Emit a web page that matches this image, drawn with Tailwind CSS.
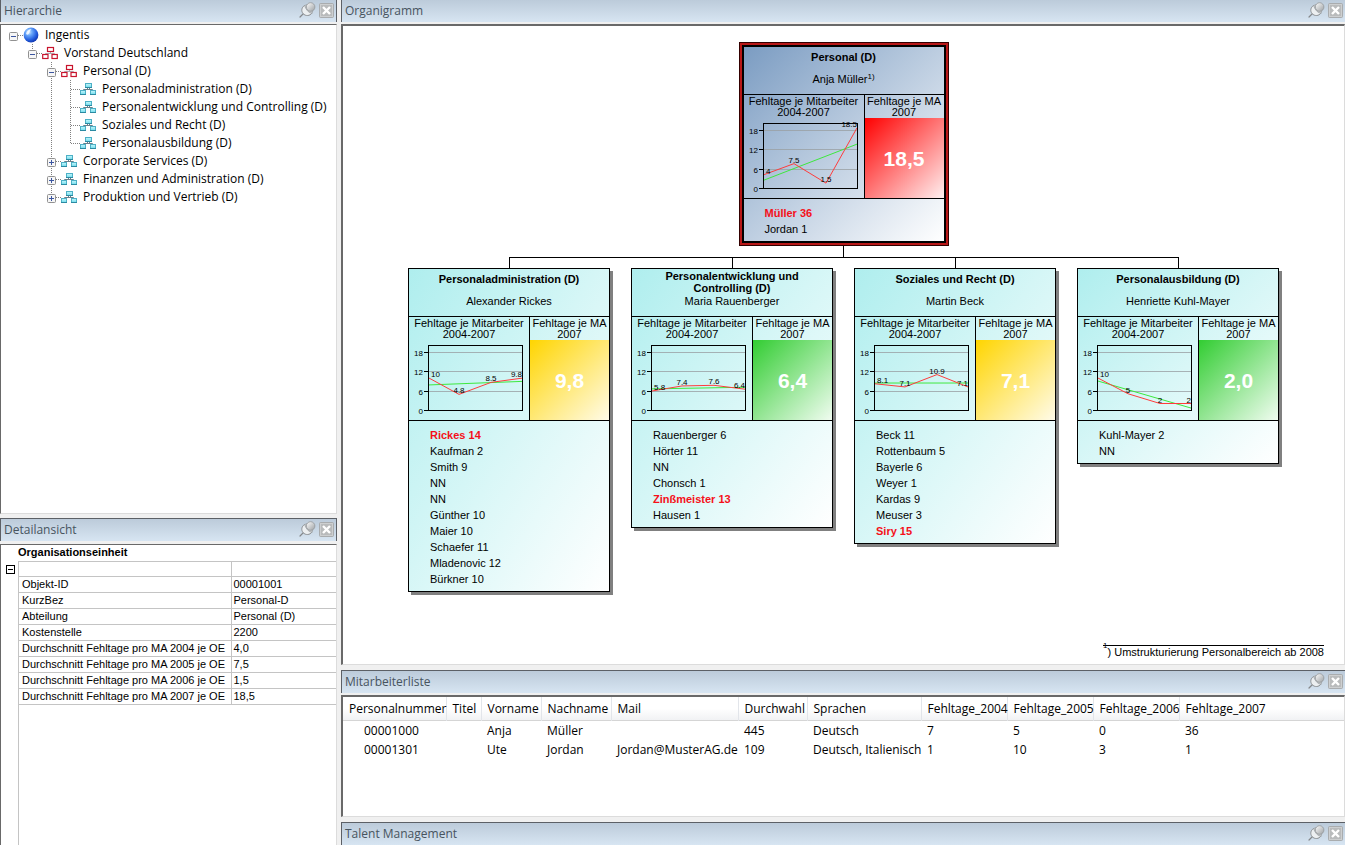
<!DOCTYPE html>
<html lang="de">
<head>
<meta charset="utf-8">
<title>Organigramm</title>
<script src="https://cdn.jsdelivr.net/npm/@tailwindcss/browser@4"></script>
</head>
<body class="h-screen overflow-hidden bg-[#f0f0f0] font-['Open_Sans','Noto_Sans',sans-serif] text-[12px] leading-[18px] text-black">

<!-- Shared icons -->
<svg width="0" height="0" class="absolute" aria-hidden="true">
  <defs>
    <radialGradient id="ball" cx="0.35" cy="0.3" r="0.75">
      <stop offset="0" stop-color="#d8ecff"/><stop offset="0.3" stop-color="#6aa8fa"/><stop offset="0.7" stop-color="#2560e0"/><stop offset="1" stop-color="#0f34ac"/>
    </radialGradient>
    <linearGradient id="pinhead" x1="0" y1="0" x2="1" y2="1">
      <stop offset="0" stop-color="#ffffff"/><stop offset="1" stop-color="#9b9fa2"/>
    </linearGradient>
    <linearGradient id="teal" x1="0" y1="0" x2="0" y2="1">
      <stop offset="0" stop-color="#c8f7fc"/><stop offset="1" stop-color="#6fdcec"/>
    </linearGradient>
  </defs>
  <symbol id="i-pin" viewBox="0 0 17 16">
    <path d="M4.500 11.500 1 15" stroke="#85888b" stroke-width="1.200" stroke-linecap="round"/>
    <path d="M5.500 3.500C2.500 5.500 2 9 4 11.500C6.500 14.500 11 14 13 11Z" fill="#eceff1" stroke="#8b8f92"/>
    <path d="M5.500 3.500 8.500 2.500 14 8 13 11.500Q8 10.500 5.500 3.500Z" fill="#c6cacd" stroke="#9a9ea1" stroke-width=".7"/>
    <circle cx="11.600" cy="5" r="4.300" fill="url(#pinhead)" stroke="#94989b" stroke-width=".8"/>
  </symbol>
  <symbol id="i-close" viewBox="0 0 15 15">
    <rect x=".5" y=".5" width="14" height="14" rx="1" fill="#b9bbbc" stroke="#a9acae"/>
    <rect x="1.500" y="1.500" width="12" height="12" fill="none" stroke="#cdcfd0"/>
    <path d="M4 4 11 11M11 4 4 11" stroke="#fff" stroke-width="2.400"/>
  </symbol>
  <symbol id="i-globe" viewBox="0 0 16 16"><circle cx="8" cy="8" r="7.400" fill="url(#ball)"/><path d="M3 7Q4 2.500 8.500 2Q6.500 4 6 6.500Q5 8.500 3 7Z" fill="#fff" opacity=".8"/></symbol>
  <symbol id="i-org-red" viewBox="0 0 16 16">
    <path d="M8.500 6V9M3.500 11V8.500H12.500V11" fill="none" stroke="#a9a9b2"/>
    <g fill="#fff" stroke="#c8142d" stroke-width="1.200"><rect x="5.500" y="2.500" width="6" height="4"/><rect x=".7" y="9.500" width="5.300" height="4"/><rect x="10" y="9.500" width="5.300" height="4"/></g>
  </symbol>
  <symbol id="i-org-teal" viewBox="0 0 16 16">
    <path d="M7.500 6V9M9.500 6V9M3.500 11V8.500H12.500V11" fill="none" stroke="#6b7f8a"/>
    <g fill="url(#teal)" stroke="#4db0c6"><rect x="5.500" y="2.500" width="6" height="4"/><rect x=".5" y="9.500" width="5" height="4"/><rect x="10.500" y="9.500" width="5" height="4"/></g>
    <path d="M5 6.500H12M0 13.500H6M10 13.500H16" stroke="#2b8aa2"/>
  </symbol>
  <symbol id="l-v" viewBox="0 0 19 18"><path d="M9.500 0V18" stroke="#808080" stroke-dasharray="1 1"/></symbol>
  <symbol id="l-tee" viewBox="0 0 19 18"><path d="M9.500 0V18M10 9.500H19" stroke="#808080" stroke-dasharray="1 1"/></symbol>
  <symbol id="l-end" viewBox="0 0 19 18"><path d="M9.500 0V10M10 9.500H19" stroke="#808080" stroke-dasharray="1 1"/></symbol>
  <symbol id="l-h" viewBox="0 0 19 18"><path d="M10 9.500H19" stroke="#808080" stroke-dasharray="1 1"/></symbol>
  <symbol id="x-minus" viewBox="0 0 19 18"><rect x="5.500" y="6.500" width="8" height="8" rx="1" fill="#f6f6f6" stroke="#919191"/><path d="M7 10.500H12" stroke="#3b55a0"/></symbol>
  <symbol id="x-plus" viewBox="0 0 19 18"><rect x="5.500" y="6.500" width="8" height="8" rx="1" fill="#f6f6f6" stroke="#919191"/><path d="M7 10.500H12M9.500 8V13" stroke="#3b55a0"/></symbol>
</svg>

<div class="flex h-full gap-1">
  <!-- Left column -->
  <div class="flex w-[337px] shrink-0 flex-col">
    <section class="flex min-h-0 flex-1 flex-col gap-[2px]">
      <header class="flex h-[22px] shrink-0 items-center border-x border-[#5c6066] bg-linear-to-b from-[#bccbda] to-[#d7e5f2] pl-[3px] text-[#47545f]">
        <h2 class="flex-1">Hierarchie</h2>
        <button class="mr-[3px] pb-[2px]" aria-label="Hierarchie anheften"><svg class="h-4 w-[17px]"><use href="#i-pin"/></svg></button>
        <button class="mr-[2px] pb-[2px]" aria-label="Hierarchie schließen"><svg class="size-[15px]"><use href="#i-close"/></svg></button>
      </header>
      <div class="min-h-0 flex-1 border border-[#dcdcdc] border-t-[#696969] border-l-[#696969] bg-white pt-px pl-[3px]">
        <ul id="tree"></ul>
      </div>
    </section>

    <section class="mt-1 flex h-[327px] shrink-0 flex-col gap-[3px]">
      <header class="flex h-[23px] shrink-0 items-center border-x border-t border-[#5c6066] bg-linear-to-b from-[#bccbda] to-[#d7e5f2] pl-[3px] text-[#47545f]">
        <h2 class="flex-1">Detailansicht</h2>
        <button class="mr-[3px] pb-[2px]" aria-label="Detailansicht anheften"><svg class="h-4 w-[17px]"><use href="#i-pin"/></svg></button>
        <button class="mr-[2px] pb-[2px]" aria-label="Detailansicht schließen"><svg class="size-[15px]"><use href="#i-close"/></svg></button>
      </header>
      <div class="flex min-h-0 flex-1 border-t border-r border-l border-[#696969] border-r-[#dcdcdc] bg-white font-['Liberation_Sans',sans-serif] text-[11px] leading-[15px]">
        <div class="w-[17px] shrink-0 pt-5 pl-[5px]">
          <button class="block" aria-label="Gruppe einklappen"><svg class="size-[9px]" viewBox="0 0 9 9"><rect x=".5" y=".5" width="8" height="8" fill="#fff" stroke="#000"/><path d="M2 4.500H7" stroke="#000"/></svg></button>
        </div>
        <div class="flex flex-1 flex-col">
          <h3 class="h-4 font-bold">Organisationseinheit</h3>
          <div class="flex-1 border-l border-[#c4c4c4]">
            <table class="w-full table-fixed border-collapse">
              <colgroup><col class="w-[212px]"><col></colgroup>
              <tbody id="details"></tbody>
            </table>
          </div>
        </div>
      </div>
    </section>
  </div>

  <!-- Right column -->
  <div class="flex min-w-0 flex-1 flex-col gap-[5px]">
    <section class="flex min-h-0 flex-1 flex-col gap-[2px]">
      <header class="flex h-[22px] shrink-0 items-center border-l border-[#5c6066] bg-linear-to-b from-[#bccbda] to-[#d7e5f2] pl-[3px] text-[#47545f]">
        <h2 class="flex-1">Organigramm</h2>
        <button class="mr-[3px] pb-[2px]" aria-label="Organigramm anheften"><svg class="h-4 w-[17px]"><use href="#i-pin"/></svg></button>
        <button class="mr-[2px] pb-[2px]" aria-label="Organigramm schließen"><svg class="size-[15px]"><use href="#i-close"/></svg></button>
      </header>
      <div class="flex min-h-0 flex-1 flex-col items-center border border-t-2 border-l-2 border-[#dcdcdc] border-t-[#696969] border-l-[#696969] bg-white pt-5 font-['Liberation_Sans',sans-serif] text-[11px]">
        <div id="root"></div>
        <div class="mt-1 h-[11px] w-px bg-black"></div>
        <div class="grid h-[11px] w-[670px] grid-cols-[223px_223px_1fr] divide-x divide-black border-x border-t border-black"><i></i><i></i><i></i></div>
        <div id="units" class="flex items-start gap-[21px]"></div>
        <p class="mt-auto mr-5 mb-[5px] self-end border-t border-black leading-[13px]"><sup class="align-top text-[8px] leading-[8px]">1</sup>) Umstrukturierung Personalbereich ab 2008</p>
      </div>
    </section>

    <section class="flex h-[147px] shrink-0 flex-col gap-[2px]">
      <header class="flex h-[23px] shrink-0 items-center border-t border-l border-[#5c6066] bg-linear-to-b from-[#bccbda] to-[#d7e5f2] pl-[3px] text-[#47545f]">
        <h2 class="flex-1">Mitarbeiterliste</h2>
        <button class="mr-[3px] pb-[2px]" aria-label="Mitarbeiterliste anheften"><svg class="h-4 w-[17px]"><use href="#i-pin"/></svg></button>
        <button class="mr-[2px] pb-[2px]" aria-label="Mitarbeiterliste schließen"><svg class="size-[15px]"><use href="#i-close"/></svg></button>
      </header>
      <div class="min-h-0 flex-1 border border-t-2 border-l-2 border-[#dcdcdc] border-t-[#696969] border-l-[#696969] bg-white">
        <table class="w-full table-fixed text-left leading-[19px] whitespace-nowrap">
          <colgroup><col class="w-[103px]"><col class="w-[35px]"><col class="w-[60px]"><col class="w-[70px]"><col class="w-[127px]"><col class="w-[69px]"><col class="w-[114px]"><col class="w-[86px]"><col class="w-[86px]"><col class="w-[86px]"><col></colgroup>
          <thead class="bg-linear-to-b from-white from-50% to-[#f1f2f4]">
            <tr id="cols" class="h-[23px] border-b border-[#d5d5d5]"></tr>
          </thead>
          <tbody id="staff"></tbody>
        </table>
      </div>
    </section>

    <section class="shrink-0">
      <header class="flex h-[23px] items-center border-t border-l border-[#5c6066] bg-linear-to-b from-[#bccbda] to-[#d7e5f2] pl-[3px] text-[#47545f]">
        <h2 class="flex-1">Talent Management</h2>
        <button class="mr-[3px] pb-[2px]" aria-label="Talent Management anheften"><svg class="h-4 w-[17px]"><use href="#i-pin"/></svg></button>
        <button class="mr-[2px] pb-[2px]" aria-label="Talent Management schließen"><svg class="size-[15px]"><use href="#i-close"/></svg></button>
      </header>
    </section>
  </div>
</div>

<script>
const byId = id => document.getElementById(id);

// Tree: each row is a list of 19px cells, then an icon and a label.
const cell = (...ids) => `<svg class="h-[18px] w-[19px] shrink-0">${ids.map(i => i ? `<use href="#${i}"/>` : '').join('')}</svg>`;
const tree = [
  [[['l-h', 'x-minus']], 'i-globe', 'Ingentis'],
  [[[''], ['l-end', 'x-minus']], 'i-org-red', 'Vorstand Deutschland'],
  [[[''], [''], ['l-tee', 'x-minus']], 'i-org-red', 'Personal (D)'],
  [[[''], [''], ['l-v'], ['l-tee']], 'i-org-teal', 'Personaladministration (D)'],
  [[[''], [''], ['l-v'], ['l-tee']], 'i-org-teal', 'Personalentwicklung und Controlling (D)'],
  [[[''], [''], ['l-v'], ['l-tee']], 'i-org-teal', 'Soziales und Recht (D)'],
  [[[''], [''], ['l-v'], ['l-end']], 'i-org-teal', 'Personalausbildung (D)'],
  [[[''], [''], ['l-tee', 'x-plus']], 'i-org-teal', 'Corporate Services (D)'],
  [[[''], [''], ['l-tee', 'x-plus']], 'i-org-teal', 'Finanzen und Administration (D)'],
  [[[''], [''], ['l-end', 'x-plus']], 'i-org-teal', 'Produktion und Vertrieb (D)']
];
byId('tree').innerHTML = tree.map(([cells, icon, label]) =>
  `<li class="flex h-[18px] items-center whitespace-nowrap">${cells.map(c => cell(...c)).join('')}<svg class="mr-[6px] h-4 w-4 shrink-0"><use href="#${icon}"/></svg>${label}</li>`).join('');

const details = [['', ''], ['Objekt-ID', '00001001'], ['KurzBez', 'Personal-D'], ['Abteilung', 'Personal (D)'], ['Kostenstelle', '2200'],
  ['Durchschnitt Fehltage pro MA 2004 je OE', '4,0'], ['Durchschnitt Fehltage pro MA 2005 je OE', '7,5'],
  ['Durchschnitt Fehltage pro MA 2006 je OE', '1,5'], ['Durchschnitt Fehltage pro MA 2007 je OE', '18,5']];
byId('details').innerHTML = details.map(([k, v]) =>
  `<tr class="h-4 border-y border-[#c4c4c4] first:h-[15px]"><th scope="row" class="truncate border-r border-[#c4c4c4] pl-[3px] text-left font-normal">${k}</th><td class="pl-[2px]">${v}</td></tr>`).join('');

byId('cols').innerHTML = ['Personalnummer', 'Titel', 'Vorname', 'Nachname', 'Mail', 'Durchwahl', 'Sprachen', 'Fehltage_2004', 'Fehltage_2005', 'Fehltage_2006', 'Fehltage_2007']
  .map(t => `<th scope="col" class="border-r border-[#e2e5ea] pl-[6px] font-normal last:border-r-0">${t}</th>`).join('');
byId('staff').innerHTML = [
  ['00001000', '', 'Anja', 'Müller', '', '445', 'Deutsch', '7', '5', '0', '36'],
  ['00001301', '', 'Ute', 'Jordan', 'Jordan@MusterAG.de', '109', 'Deutsch, Italienisch', '1', '10', '3', '1']
].map(r => `<tr class="h-[19px]">${r.map(t => `<td class="pl-[6px] first:pl-[21px]">${t}</td>`).join('')}</tr>`).join('');

// Chart: 0..20 on the y axis over 65px, four years on the x axis.
function chart(vals, trend) {
  const X = [19, 50, 82, 113], y = v => 70 - v * 3.25;
  const line = (pts, c) => `<polyline fill="none" stroke="${c}" points="${pts.join(' ')}"/>`;
  const grid = [6, 12, 18].map(v => `<path d="M19 ${Math.round(y(v)) + .5}H113" stroke="#9aa0a4" stroke-opacity=".8"/>`).join('');
  const axis = [0, 6, 12, 18].map(v => `<path d="M15 ${Math.round(y(v)) + .5}H19" stroke="#000"/><text x="14" y="${Math.round(y(v)) + 3.5}" text-anchor="end">${v}</text>`).join('');
  const labels = vals.map((v, i) => `<text x="${[22, 50, 82, 113][i]}" y="${y(v) - 1}" text-anchor="${['start', 'middle', 'middle', 'end'][i]}">${v}</text>`).join('');
  return `<svg class="block h-[76px] w-[120px] font-['Liberation_Sans',sans-serif] text-[8px]" viewBox="0 0 120 76" role="img" aria-label="Fehltage 2004 bis 2007">${grid}${line([`19,${y(trend[0])}`, `113,${y(trend[1])}`], '#3ee83e')}${line(vals.map((v, i) => `${X[i]},${y(v)}`), '#ff3c3c')}<rect x="19.5" y="5.5" width="94" height="65" fill="none" stroke="#000"/>${axis}${labels}</svg>`;
}

const fill = {
  red: 'bg-linear-to-br/srgb from-[#ff0000] to-[#fff0f0]',
  yellow: 'bg-linear-to-br/srgb from-[#ffd500] to-[#fffbe8]',
  green: 'bg-linear-to-br/srgb from-[#32cd32] to-[#f0fcf0]'
};
const look = {
  root: 'bg-linear-to-br/srgb from-[#7b9cc2] to-white shadow-[0_0_0_1px_#000,0_0_0_3px_#b81818,0_0_0_4px_#300]',
  unit: 'bg-linear-to-br/srgb from-[#afeeee] to-white shadow-[3px_3px_0_#808080]'
};
function card(d, kind) {
  return `<article class="w-[202px] border border-black ${look[kind]}">
    <div class="flex h-[47px] flex-col items-center text-center">
      <h3 class="flex items-center justify-center text-[11px] leading-[12px] font-bold ${d.wide ? 'h-[26px]' : 'h-[20px]'}">${d.title}</h3>
      <p class="mt-auto mb-[8px] leading-[13px]">${d.head}</p>
    </div>
    <div class="flex h-[105px] border-y border-black text-center leading-[11px]">
      <div class="w-[121px] shrink-0 border-r border-black pt-px">Fehltage je Mitarbeiter<br>2004-2007${chart(d.vals, d.trend)}</div>
      <div class="flex flex-1 flex-col pt-px"><span>Fehltage je MA<br>2007</span>
        <b class="flex flex-1 items-center justify-center text-[21px] text-white ${fill[d.color]}">${d.big}</b></div>
    </div>
    <ul class="pt-[6px] pb-1 pl-[21px] leading-4">${d.people.map(p => `<li class="${p[0] === '!' ? 'font-bold text-[#f5101a]' : ''}">${p.replace('!', '')}</li>`).join('')}</ul>
  </article>`;
}
byId('root').innerHTML = card({ title: 'Personal (D)', head: 'Anja Müller<sup class="text-[8px]">1)</sup>', vals: [4, 7.5, 1.5, 18.5], trend: [2.3, 13.5], color: 'red', big: '18,5', people: ['!Müller 36', 'Jordan 1'] }, 'root');
byId('units').innerHTML = [
  { title: 'Personaladministration (D)', head: 'Alexander Rickes', vals: [10, 4.8, 8.5, 9.8], trend: [7.7, 8.8], color: 'yellow', big: '9,8', people: ['!Rickes 14', 'Kaufman 2', 'Smith 9', 'NN', 'NN', 'Günther 10', 'Maier 10', 'Schaefer 11', 'Mladenovic 12', 'Bürkner 10'] },
  { title: 'Personalentwicklung und<br>Controlling (D)', wide: 1, head: 'Maria Rauenberger', vals: [5.8, 7.4, 7.6, 6.4], trend: [6.5, 7], color: 'green', big: '6,4', people: ['Rauenberger 6', 'Hörter 11', 'NN', 'Chonsch 1', '!Zinßmeister 13', 'Hausen 1'] },
  { title: 'Soziales und Recht (D)', head: 'Martin Beck', vals: [8.1, 7.1, 10.9, 7.1], trend: [8.3, 8.3], color: 'yellow', big: '7,1', people: ['Beck 11', 'Rottenbaum 5', 'Bayerle 6', 'Weyer 1', 'Kardas 9', 'Meuser 3', '!Siry 15'] },
  { title: 'Personalausbildung (D)', head: 'Henriette Kuhl-Mayer', vals: [10, 5, 2, 2], trend: [9, 0.6], color: 'green', big: '2,0', people: ['Kuhl-Mayer 2', 'NN'] }
].map(d => card(d, 'unit')).join('');
</script>
</body>
</html>
